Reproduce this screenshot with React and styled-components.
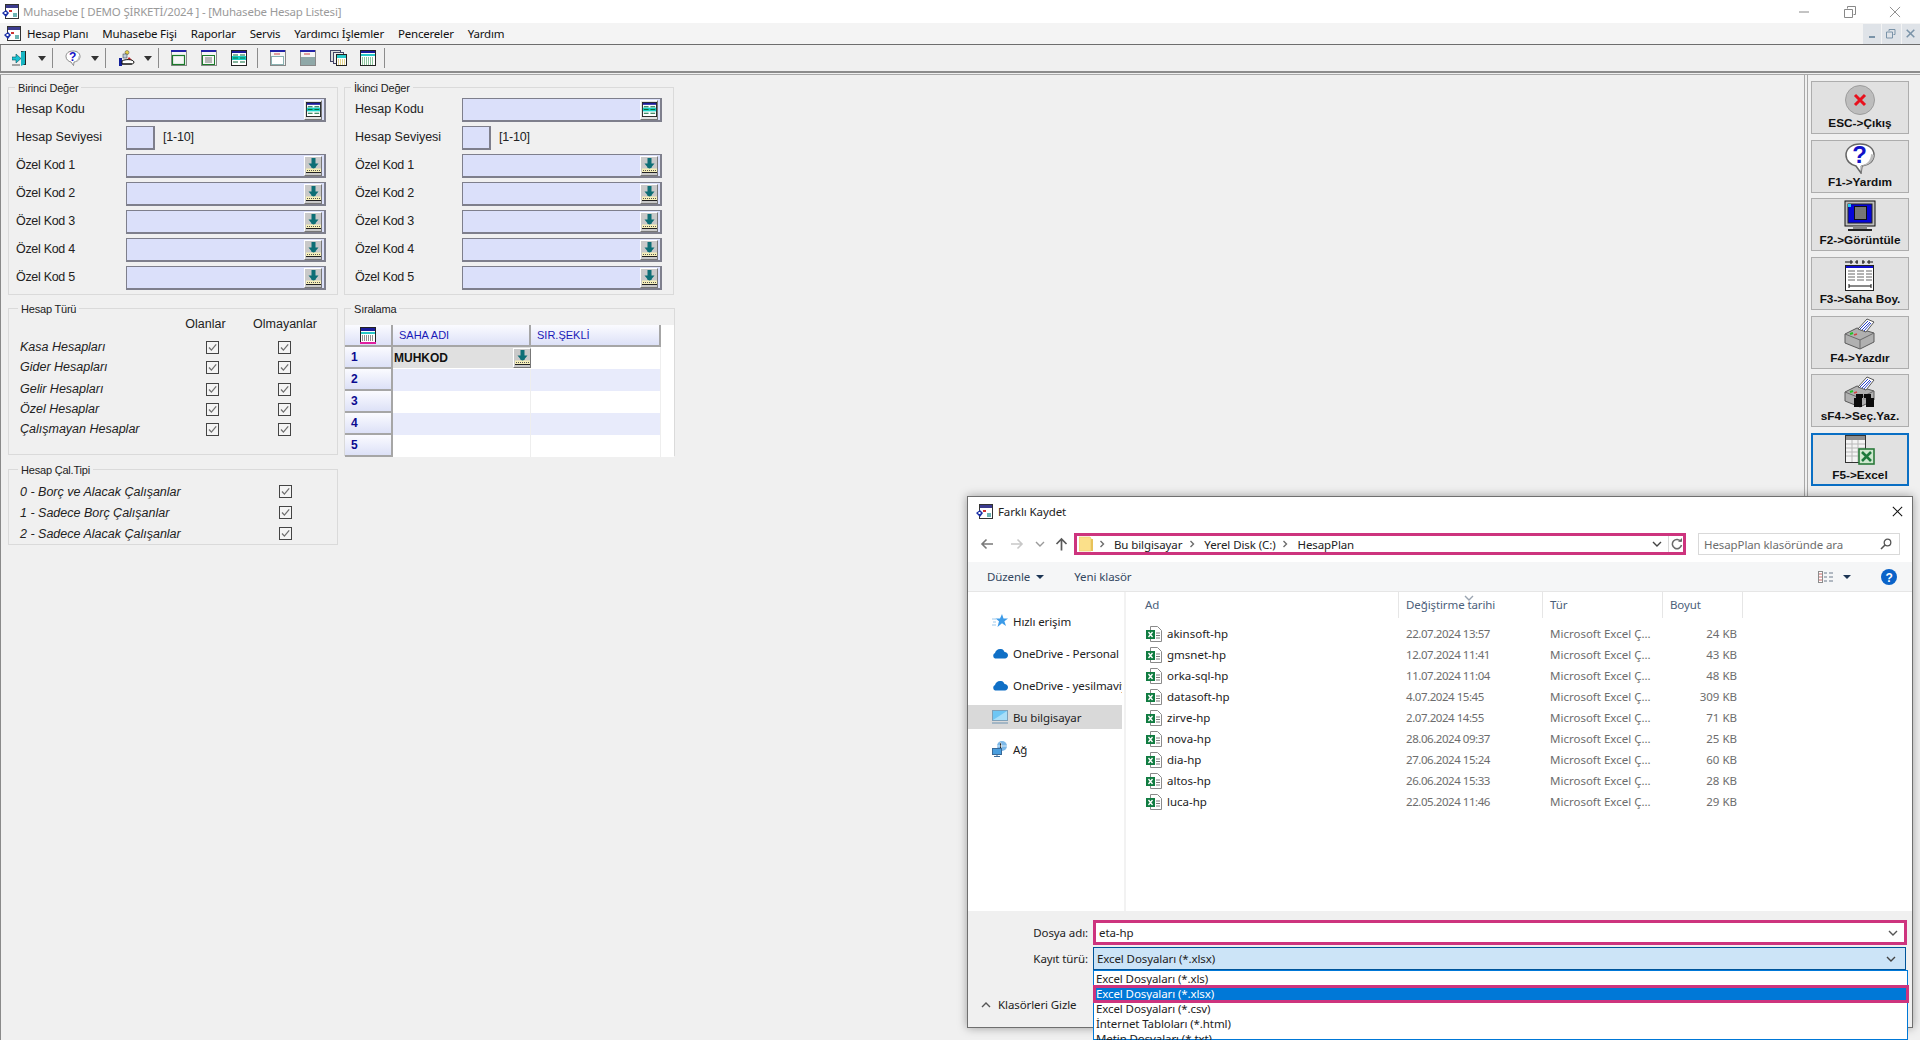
import { Fragment } from "react";
import styled, { createGlobalStyle } from "styled-components";

const GlobalStyle = createGlobalStyle`
  html, body { margin: 0; padding: 0; background: #f0f0f0; }
  * { box-sizing: border-box; }
  svg { display: block; flex: none; }
`;

const ui = `"Liberation Sans", Arial, sans-serif`;
const seg = `"Noto Sans", "Open Sans", sans-serif`;

const Screen = styled.div`
  position: relative;
  width: 1920px;
  height: 1040px;
  overflow: hidden;
  background: #f0f0f0;
  font-family: ${ui};
  color: #111;
  display: flex;
  flex-direction: column;
`;

const TitleBar = styled.div`
  height: 23px;
  background: #fff;
  display: flex;
  align-items: center;
  padding-left: 2px;
  font: 11.5px ${seg};
  letter-spacing: -0.2px;
  color: #9a9a9a;
  gap: 4px;
`;
const WinBtns = styled.div`
  margin-left: auto;
  display: flex;
  align-items: center;
  gap: 33.5px;
  padding-right: 19px;
`;

const MenuBar = styled.div`
  height: 22px;
  display: flex;
  align-items: center;
  padding-left: 4px;
  background: #f4f4f4;
  border-bottom: 1px solid #6d6d6d;
  font: 11.5px ${seg};
  letter-spacing: -0.2px;
  color: #111;
`;
const MenuItem = styled.span`
  margin-left: ${(p) => p.$gap}px;
`;
const MdiBtns = styled.div`
  margin-left: auto;
  display: flex;
  gap: 1px;
`;
const MdiBtn = styled.div`
  width: 18.5px;
  height: 20px;
  background: #dfe3e8;
  display: flex;
  align-items: center;
  justify-content: center;
`;

const ToolBar = styled.div`
  height: 28px;
  display: flex;
  align-items: center;
  padding-left: 4px;
  border-left: 1px solid #8a8a8a;
  border-bottom: 2px solid #8c8c8c;
`;
const ToolBtn = styled.div`
  width: 30px;
  height: 22px;
  display: flex;
  align-items: center;
  justify-content: center;
`;
const Caret = styled.div`
  width: 14px;
  display: flex;
  justify-content: center;
  &::before {
    content: "";
    border: 4px solid transparent;
    border-top: 5px solid #333;
    border-bottom: 0;
  }
`;
const ToolSep = styled.div`
  width: 1px;
  height: 20px;
  background: #8c8c8c;
  margin: 0 5px 0 ${(p) => p.$left ?? 3}px;
`;

const Body = styled.div`
  flex: 1;
  display: flex;
  margin-top: 1px;
  border-top: 1px solid #a8a8a8;
  min-height: 0;
`;
const Form = styled.div`
  width: 1804px;
  border-left: 1px solid #8a8a8a;
  padding: 12px 0 0 7px;
  display: flex;
  gap: 6px;
  align-items: flex-start;
`;
const Stack = styled.div`
  display: flex;
  flex-direction: column;
  width: ${(p) => p.$w}px;
`;
const Panel = styled.div`
  position: relative;
  width: ${(p) => p.$w ?? 330}px;
  height: ${(p) => p.$h}px;
  margin-bottom: ${(p) => p.$mb ?? 0}px;
  border: 1.5px solid #dadada;
  padding: ${(p) => p.$pad};
`;
const Legend = styled.span`
  position: absolute;
  top: -7px;
  left: ${(p) => p.$left}px;
  padding: 0 3px;
  background: #f0f0f0;
  font-size: 11px;
  line-height: 14px;
  letter-spacing: -0.2px;
  color: #222;
`;
const Fields = styled.div`
  display: flex;
  flex-direction: column;
  gap: 4px;
`;
const FieldRow = styled.div`
  display: flex;
  align-items: center;
  height: 24px;
`;
const FieldLabel = styled.span`
  width: ${(p) => p.$w}px;
  padding-bottom: 2px;
  font-size: 12.5px;
  letter-spacing: ${(p) => (p.$tight ? "-0.3px" : "0")};
  color: #222;
`;
const Input = styled.div`
  width: ${(p) => (p.$small ? 29 : 200)}px;
  height: 24px;
  background: #dbe0fa;
  border: 1px solid #7e7f8c;
  border-right-width: 2px;
  border-bottom-width: 2px;
  display: flex;
  align-items: center;
  justify-content: flex-end;
  padding-right: 2px;
`;
const PickBtn = styled.div`
  width: 18px;
  height: 20px;
  background: ${(p) => (p.$light ? "#e4e4e4" : "#c9c9c9")};
  border: 1px solid;
  border-color: #fff #777 #777 #fff;
  display: flex;
  align-items: center;
  justify-content: center;
`;
const RangeHint = styled.span`
  margin-left: 8px;
  padding-bottom: 2px;
  font-size: 12.5px;
  letter-spacing: -0.2px;
  color: #222;
`;

const ChoiceHead = styled.div`
  display: grid;
  grid-template-columns: 157px 72px 72px;
  height: 20px;
  align-items: center;
  margin-bottom: 3px;
  font-size: 12.5px;
  color: #222;
`;
const HeadCell = styled.span`
  grid-column: ${(p) => p.$col};
  justify-self: center;
  padding-right: ${(p) => p.$shift ?? 0}px;
  white-space: nowrap;
`;
const ChoiceRow = styled.div`
  display: grid;
  grid-template-columns: ${(p) => p.$cols};
  height: ${(p) => p.$h}px;
  align-items: center;
  margin-top: ${(p) => p.$top ?? 0}px;
  font-size: 12.5px;
  font-style: italic;
  color: #222;
`;
const CheckBox = styled.span`
  justify-self: center;
  width: 13px;
  height: 13px;
  background: #f4f4f4;
  border: 1px solid #444;
  display: flex;
  align-items: center;
  justify-content: center;
`;

const SortGrid = styled.div`
  display: grid;
  grid-template-columns: 48px 138px 130px 12px;
  grid-auto-rows: 22px;
  background: #fff;
  font-size: 11px;
`;
const FixedCell = styled.div`
  background: linear-gradient(#fbfbff, #dde1f7);
  border-right: 2px solid #a6a6a6;
  border-bottom: 2px solid #a6a6a6;
  display: flex;
  align-items: center;
  padding-left: ${(p) => p.$pad ?? 6}px;
  justify-content: ${(p) => (p.$center ? "center" : "flex-start")};
  color: ${(p) => (p.$head ? "#1a1ab8" : "#0a0a90")};
  font-weight: ${(p) => (p.$head ? 400 : 700)};
  font-size: ${(p) => (p.$head ? 11 : 12)}px;
`;
const DataCell = styled.div`
  background: ${(p) => (p.$alt ? "#e8ebfb" : "#fff")};
  border-right: 1px solid #eeeeee;
`;
const SelCell = styled.div`
  background: #e0e0e0;
  border-bottom: 1px solid #fff;
  display: flex;
  align-items: center;
  justify-content: space-between;
  padding-left: 1px;
  font-size: 12px;
  font-weight: 700;
  color: #111;
`;
const Spacer = styled.div`
  background: #fff;
`;

const Sidebar = styled.div`
  flex: 1;
  border-left: 1px solid #a8a8a8;
  padding: 6px 11px 0 6px;
  display: flex;
  flex-direction: column;
  gap: 5.67px;
  position: relative;
  &::before {
    content: "";
    position: absolute;
    left: 2px;
    top: -1px;
    bottom: 0;
    width: 1px;
    background: #a8a8a8;
  }
`;
const SideBtn = styled.div`
  height: 53px;
  background: #e1e1e1;
  border: ${(p) => (p.$focus ? "2px solid #0a6fc4" : "1px solid #adadad")};
  display: flex;
  flex-direction: column;
  align-items: center;
  justify-content: flex-end;
  padding-bottom: ${(p) => (p.$focus ? 2 : 3)}px;
  gap: 1px;
  font-size: 11.8px;
  line-height: 14px;
  font-weight: 700;
  color: #111;
  white-space: nowrap;
`;

/* save dialog */
const Dialog = styled.div`
  position: absolute;
  left: 967px;
  top: 496px;
  width: 946px;
  height: 532px;
  background: #fff;
  border: 1px solid #6f6f6f;
  box-shadow: 0 0 9px rgba(0, 0, 0, 0.35);
  display: flex;
  flex-direction: column;
  font: 11.5px ${seg};
  letter-spacing: -0.1px;
  color: #222;
`;
const DlgTitle = styled.div`
  height: 30px;
  display: flex;
  align-items: center;
  padding: 0 9px 2px 8px;
  gap: 5px;
`;
const DlgClose = styled.div`
  margin-left: auto;
`;
const AddrRow = styled.div`
  height: 35px;
  display: flex;
  align-items: flex-start;
  padding-top: 6px;
`;
const NavBtns = styled.div`
  width: 106px;
  height: 22px;
  padding-left: 12px;
  display: flex;
  align-items: center;
`;
const NavBtn = styled.div`
  width: ${(p) => p.$w}px;
`;
const AddrBox = styled.div`
  width: 612px;
  height: 22px;
  border: 3px solid #cd347e;
  display: flex;
  align-items: center;
  padding-left: 2px;
`;
const Crumb = styled.span`
  margin: 0 5px 0 7px;
  white-space: nowrap;
`;
const AddrTools = styled.div`
  margin-left: auto;
  display: flex;
  align-items: center;
  height: 100%;
`;
const AddrDiv = styled.div`
  width: 1px;
  height: 100%;
  margin: 0 2px 0 6px;
  background: #d9d9d9;
`;
const SearchBox = styled.div`
  width: 202px;
  height: 22px;
  margin-left: 12px;
  border: 1px solid #d9d9d9;
  display: flex;
  align-items: center;
  justify-content: space-between;
  padding: 0 7px 0 5px;
  color: #6d6d6d;
`;
const CmdBar = styled.div`
  height: 30px;
  background: #f5f6f7;
  border-bottom: 1px solid #e6e6e6;
  display: flex;
  align-items: center;
  padding: 0 15px 0 19px;
  color: #33475f;
`;
const CmdArrow = styled.span`
  margin-left: 6px;
  width: 0;
  height: 0;
  border: 4px solid transparent;
  border-top: 4px solid #1c3554;
  border-bottom: 0;
`;
const CmdItem = styled.span`
  margin-left: ${(p) => p.$gap ?? 0}px;
`;
const CmdRight = styled.div`
  margin-left: auto;
  display: flex;
  align-items: center;
  gap: 30px;
`;
const ViewTool = styled.div`
  display: flex;
  align-items: center;
  gap: 3px;
`;
const Main = styled.div`
  flex: 1;
  display: flex;
  min-height: 0;
`;
const Nav = styled.div`
  width: 158px;
  padding: 17px 2px 0 0;
  border-right: 2px solid #f2f2f2;
  display: flex;
  flex-direction: column;
  gap: 8px;
`;
const NavItem = styled.div`
  height: 24px;
  display: flex;
  align-items: center;
  gap: 5px;
  padding-left: 24px;
  background: ${(p) => (p.$on ? "#d9d9d9" : "transparent")};
  white-space: nowrap;
  overflow: hidden;
`;
const List = styled.div`
  flex: 1;
  position: relative;
`;
const HeadRow = styled.div`
  display: grid;
  grid-template-columns: 273px 144px 120px 80px;
  height: 26px;
  margin-bottom: 5px;
  color: #4c607a;
`;
const HeadCol = styled.div`
  padding-left: ${(p) => p.$pad}px;
  padding-top: 5px;
  border-right: 1px solid #e6e6e6;
  position: relative;
`;
const SortMark = styled.span`
  position: absolute;
  left: 65px;
  top: 1px;
`;
const FileRow = styled.div`
  display: grid;
  grid-template-columns: 273px 144px 120px 74px;
  height: 21px;
  align-items: center;
  color: #6d6d6d;
`;
const FileName = styled.div`
  display: flex;
  align-items: center;
  gap: 5px;
  padding-left: 20px;
  letter-spacing: 0;
  color: #222;
`;
const FileCol = styled.div`
  padding-left: 7px;
  white-space: nowrap;
  letter-spacing: ${(p) => p.$ls ?? 0}px;
  text-align: ${(p) => (p.$right ? "right" : "left")};
`;
const Footer = styled.div`
  position: relative;
  height: 116px;
  background: #f0f0f0;
  padding: 9px 5px 0 0;
`;
const FootRow = styled.div`
  display: flex;
  align-items: center;
  height: ${(p) => p.$h}px;
  margin-bottom: ${(p) => p.$mb ?? 0}px;
`;
const FootLabel = styled.span`
  width: 125px;
  text-align: right;
  padding-right: 5px;
  flex: none;
`;
const NameBox = styled.div`
  flex: 1;
  height: 100%;
  background: #fff;
  border: 3px solid #cd347e;
  display: flex;
  align-items: center;
  justify-content: space-between;
  padding: 0 6px 0 3px;
`;
const TypeBox = styled.div`
  flex: 1;
  height: 100%;
  margin-right: 1px;
  background: #cce4f7;
  border: 1px solid #005499;
  display: flex;
  align-items: center;
  justify-content: space-between;
  padding: 0 9px 0 3px;
`;
const ToggleFolders = styled.div`
  position: absolute;
  left: 13px;
  top: 86px;
  display: flex;
  align-items: center;
  gap: 7px;
`;
const DropList = styled.div`
  position: absolute;
  left: 125px;
  top: 59px;
  width: 815px;
  height: 70px;
  background: #fff;
  border: 1px solid #0078d7;
  padding-top: 1px;
`;
const DropItem = styled.div`
  position: relative;
  height: 15px;
  line-height: 13px;
  padding-left: 2px;
  white-space: nowrap;
  background: ${(p) => (p.$on ? "#0078d7" : "transparent")};
  color: ${(p) => (p.$on ? "#fff" : "#222")};
  &::after {
    content: "";
    display: ${(p) => (p.$on ? "block" : "none")};
    position: absolute;
    inset: -2px -2px -1px -1px;
    border: 3px solid #cd347e;
  }
`;

/* icons */
const AppIcon = () => (
  <svg width="17" height="17" viewBox="0 0 17 17">
    <rect x="3.5" y="1.5" width="13" height="14" fill="#fff" stroke="#333" />
    <rect x="4" y="2" width="12" height="3" fill="#3b3b8e" />
    <rect x="7" y="7" width="3" height="2" fill="#c33" />
    <rect x="11" y="10" width="4" height="4" fill="#6bb3b3" />
    <path d="M0 10l4-3 3 3-3 4z" fill="#1a2fa8" />
    <rect x="2.5" y="9" width="2" height="2" fill="#fff" />
  </svg>
);
const CloseGlyph = ({ size = 13, color = "#777", w = 1 }) => (
  <svg width={size} height={size} viewBox="0 0 13 13">
    <path d="M1 1l11 11M12 1L1 12" stroke={color} strokeWidth={w} fill="none" />
  </svg>
);
const ExitTool = () => (
  <svg width="16" height="17" viewBox="0 0 16 17">
    <path d="M9 1h5v14H9z" fill="#222" />
    <path d="M9 2l4-1v13l-4 2z" fill="#17b6c4" />
    <path d="M0 7h4V4l5 4.5L4 13v-3H0z" fill="#18c2d2" stroke="#08505a" strokeWidth=".6" />
    <path d="M0 15h8" stroke="#555" />
  </svg>
);
const HelpBubble = ({ size = 16 }) => (
  <svg width={size} height={size} viewBox="0 0 32 32">
    <path d="M16 2C7 2 2 7 2 13c0 6 5 10 10 11l5 7 1-7c7-1 12-5 12-11C30 7 25 2 16 2z" fill="#fff" stroke="#666" strokeWidth="1.5" />
    <path d="M30 13c0 6-5 10-12 11l-1 7-1-7c7-1 11-6 11-12z" fill="#bdbdbd" />
    <text x="15.5" y="21" fontFamily="Liberation Sans" fontWeight="700" fontSize="24" textAnchor="middle" fill="#1212c8">?</text>
  </svg>
);
const HandTool = () => (
  <svg width="17" height="17" viewBox="0 0 17 17">
    <circle cx="9" cy="2.5" r="2" fill="#e8d24a" stroke="#444" strokeWidth=".5" />
    <rect x="5" y="4" width="4" height="4" fill="#bcd" stroke="#333" strokeWidth=".5" />
    <path d="M11 7l3 3H9z" fill="#c22" />
    <path d="M1 8h3v8H1z" fill="#12209c" />
    <path d="M4 11c3-2 11-2 12 1 0 2-2 2-4 2H4z" fill="#fff" stroke="#111" />
    <path d="M4 14h10" stroke="#111" />
  </svg>
);
const WinTool = ({ inner }) => (
  <svg width="16" height="16" viewBox="0 0 16 16">
    <rect x=".5" y=".5" width="15" height="15" fill="#f5f5f5" stroke="#888" />
    <rect x="0" y="0" width="15" height="2" fill="#2222a8" />
    {inner}
  </svg>
);
const GridMark = ({ size = 16 }) => (
  <svg width={size} height={size} viewBox="0 0 16 16">
    <rect x=".5" y=".5" width="15" height="15" fill="#fff" stroke="#222" />
    <rect x="1" y="1" width="14" height="2" fill="#1b1b9a" />
    <rect x="1" y="6" width="14" height="4" fill="#17d0c4" />
    <path d="M2 5h5M9 5h5M2 8h5M9 8h5M2 12h5M9 12h5" stroke="#0a6a3a" strokeWidth="1.2" />
  </svg>
);
const PickMark = ({ size = 15 }) => (
  <svg width={size} height={size} viewBox="0 0 15 15">
    <path d="M5.5 0h4v5.5h3L7.5 11.500 2.500 5.500h3z" fill="#0e6f76" />
    <rect x="0" y="10.500" width="15" height="3.500" fill="#f6efb8" />
    <path d="M1 12.500h13" stroke="#555" strokeDasharray="1 1" />
    <path d="M0 14.500h15" stroke="#222" />
    <path d="M5.5 7h4v3h-4z" fill="#0e6f76" />
  </svg>
);
const TableMark = () => (
  <svg width="16" height="17" viewBox="0 0 16 17">
    <rect x=".5" y=".5" width="15" height="15" fill="#fff" stroke="#222" />
    <rect x="1" y="1" width="14" height="3" fill="#1b1b9a" />
    <rect x="1" y="5" width="14" height="2" fill="#28c8c8" />
    <path d="M2 9h12M2 11h12M2 13h12" stroke="#222" strokeDasharray="1 1" />
    <rect x="0" y="15" width="16" height="2" fill="#e020a0" />
  </svg>
);

const CheckIcon = () => (
  <svg width="11" height="11" viewBox="0 0 11 11">
    <path d="M2 5.5l2.4 2.6L9.2 2.4" fill="none" stroke="#707070" strokeWidth="1.3" />
  </svg>
);
const Check = () => (
  <CheckBox>
    <CheckIcon />
  </CheckBox>
);

const ExitBig = () => (
  <svg width="30" height="30" viewBox="0 0 30 30">
    <circle cx="15" cy="15" r="14.5" fill="#bdbdbd" stroke="#9c9c9c" />
    <path d="M10 10l10 10M20 10L10 20" stroke="#e8101c" strokeWidth="3" />
  </svg>
);
const MonitorBig = () => (
  <svg width="32" height="32" viewBox="0 0 32 32">
    <rect x="1" y="1" width="30" height="25" fill="#bdbdbd" stroke="#111" />
    <rect x="4" y="4" width="24" height="19" fill="#0606d8" stroke="#222" />
    <rect x="4" y="4" width="3" height="3" fill="#21c8f0" />
    <rect x="10" y="6" width="13" height="14" fill="#111" />
    <path d="M11 8h11M11 10h11M11 12h11M11 14h11M11 16h11M11 18h11" stroke="#ddd" />
    <rect x="9" y="26" width="14" height="3" fill="#888" />
    <rect x="4" y="29" width="24" height="2" fill="#222" />
  </svg>
);
const ColsBig = () => (
  <svg width="30" height="31" viewBox="0 0 30 31">
    <path d="M0 2h8M6 0v4M13 2h-3M17 2h3M22 2h6M24 0v4M12 0v4M18 0v4" stroke="#111" />
    <rect x=".5" y="5.5" width="28" height="25" fill="#fff" stroke="#222" />
    <rect x="1" y="6" width="27" height="2" fill="#1010d0" />
    <path d="M3 11h7M3 14h7M3 17h7M3 20h7M12 11h7M12 14h7M12 17h7M12 20h7M21 11h6M21 14h6M21 17h6M21 20h6" stroke="#666" />
    <path d="M4 26h22M4 24v4M26 24v4" stroke="#111" />
  </svg>
);
const PrinterShape = () => (
  <>
    <path d="M1 16l12-6 17 5v9l-14 7-15-6z" fill="#b0b0b0" stroke="#5a5a5a" />
    <path d="M14 11l9-10 7 3-8 10z" fill="#fff" stroke="#555" />
    <path d="M16 11l8-8M18 12l8-8M20 13l7-8" stroke="#2a42c8" />
    <path d="M1 16l15 6 14-7" fill="none" stroke="#6a6a6a" />
    <path d="M16 22v9" stroke="#6a6a6a" />
    <path d="M6 16l3-1" stroke="#22c422" strokeWidth="2" />
    <path d="M10 17l3-1" stroke="#d04444" strokeWidth="1.5" />
  </>
);
const PrinterBig = () => (
  <svg width="32" height="32" viewBox="0 0 32 32">
    <PrinterShape />
  </svg>
);
const SelectPrintBig = () => (
  <svg width="32" height="32" viewBox="0 0 32 32">
    <PrinterShape />
    <path d="M12 18h7v4h-1v9h-8v-9h2zM20 18h7v4h3v9h-8v-9h-2z" fill="#0c0c0c" />
    <path d="M19 23h3" stroke="#888" />
  </svg>
);
const ExcelBig = () => (
  <svg width="30" height="32" viewBox="0 0 30 32">
    <rect x=".5" y=".5" width="20" height="27" fill="#f4f4f4" stroke="#333" />
    <rect x="1" y="1" width="19" height="4" fill="#8e8e8e" />
    <path d="M1 9h19M1 13h19M1 17h19M1 21h19M7 5v22M13 5v22" stroke="#b8b8b8" />
    <rect x="14" y="14" width="15" height="15" fill="#cfe8cf" stroke="#2a7a3a" strokeWidth="1.6" />
    <path d="M17 17l9 9M26 17l-9 9" stroke="#1d7a3c" strokeWidth="2.600" />
  </svg>
);
const FileIcon = () => (
  <svg width="16" height="16" viewBox="0 0 16 16">
    <path d="M4.5.5h7l4 4v11h-11z" fill="#fff" stroke="#8a8a8a" />
    <path d="M10 7h4M10 9.5h4M10 12h4" stroke="#7c7c7c" />
    <rect x="0" y="4" width="9" height="9" fill="#107c41" />
    <path d="M2.5 6l4 5M6.5 6l-4 5" stroke="#fff" strokeWidth="1.3" />
  </svg>
);
const FolderIcon = () => (
  <svg width="18" height="16" viewBox="0 0 18 16">
    <path d="M0 1h11l1 1v13H0z" fill="#fbe08a" stroke="#e6c868" strokeWidth=".6" />
    <path d="M12 3h2v12h-2z" fill="#e8c25a" />
  </svg>
);
const Chevron = ({ dir = "right", color = "#6d6d6d" }) => {
  const d = { right: "M3.5 2l3 3-3 3", down: "M1 3l4 4 4-4", up: "M1 7l4-4 4 4" }[dir];
  return (
    <svg width="10" height="10" viewBox="0 0 10 10">
      <path d={d} fill="none" stroke={color} strokeWidth="1.4" />
    </svg>
  );
};
const ArrowLeft = ({ color }) => (
  <svg width="14" height="12" viewBox="0 0 14 12">
    <path d="M13 6H2M6.5 1.5L2 6l4.5 4.5" fill="none" stroke={color} strokeWidth="1.6" />
  </svg>
);
const ArrowRight = ({ color }) => (
  <svg width="14" height="12" viewBox="0 0 14 12">
    <path d="M1 6h11M7.5 1.5L12 6l-4.5 4.5" fill="none" stroke={color} strokeWidth="1.6" />
  </svg>
);
const ArrowUp = () => (
  <svg width="13" height="14" viewBox="0 0 13 14">
    <path d="M6.5 13.5V2M1.5 7l5-5 5 5" fill="none" stroke="#5a5a5a" strokeWidth="1.7" />
  </svg>
);
const Refresh = () => (
  <svg width="12" height="12" viewBox="0 0 12 12">
    <path d="M9.8 3.5A4.6 4.6 0 1 0 10.5 7" fill="none" stroke="#6a6a6a" strokeWidth="1.5" />
    <path d="M7 3.8h4V0z" fill="#6a6a6a" />
  </svg>
);
const SearchIcon = () => (
  <svg width="12" height="12" viewBox="0 0 12 12">
    <circle cx="7.5" cy="4.5" r="3.3" fill="none" stroke="#555" strokeWidth="1.3" />
    <path d="M5 7l-4 4" stroke="#555" strokeWidth="1.6" />
  </svg>
);
const ViewIcon = () => (
  <svg width="16" height="12" viewBox="0 0 16 12">
    <rect x=".5" y=".5" width="4" height="11" fill="#fff" stroke="#8c8c8c" />
    <path d="M1 3h3M1 6h3M1 9h3" stroke="#c66" />
    <path d="M6 2h3M11 2h4M6 6h3M11 6h4M6 10h3M11 10h4" stroke="#6c7a8c" />
  </svg>
);
const HelpDisc = () => (
  <svg width="16" height="16" viewBox="0 0 16 16">
    <circle cx="8" cy="8" r="8" fill="#0a63c9" />
    <text x="8" y="12.5" fontFamily="Liberation Sans" fontWeight="700" fontSize="12" textAnchor="middle" fill="#fff">?</text>
  </svg>
);
const StarIcon = () => (
  <svg width="16" height="16" viewBox="0 0 16 16">
    <path d="M10 1l1.5 4.5H16l-3.6 2.8L14 13l-4-2.7L5.5 14 7 8.3 3.5 5.5H8z" fill="#3c9be8" />
    <path d="M0 6h4M1 9h3M0 12h4" stroke="#9cc8ec" />
  </svg>
);
const CloudIcon = () => (
  <svg width="16" height="11" viewBox="0 0 16 11">
    <path d="M3 10.5A3 3 0 0 1 3 5c.5-2.500 3-4.500 6-4 2 .2 3 1.500 3.500 3 2 0 3.500 1.500 3.500 3.300 0 2-1.500 3.200-3 3.200z" fill="#0f6fc6" />
  </svg>
);
const PcIcon = () => (
  <svg width="16" height="15" viewBox="0 0 16 15">
    <rect x=".5" y=".5" width="15" height="10" fill="#6ec6f4" stroke="#7ea0b8" />
    <path d="M1 10L15 1v9z" fill="#a8def8" />
    <path d="M0 13h16" stroke="#8fa8bc" strokeWidth="1.5" />
  </svg>
);
const NetIcon = () => (
  <svg width="16" height="16" viewBox="0 0 16 16">
    <circle cx="10" cy="5" r="5" fill="#7cb8e8" />
    <path d="M8 1c2 2 2 6 0 8M5 5h10" stroke="#fff" strokeWidth=".7" />
    <rect x=".5" y="7.5" width="9" height="6" fill="#4a9ede" stroke="#3a6a98" />
    <path d="M5 14v2M2 15.5h6" stroke="#3a6a98" />
  </svg>
);

/* data */
const menus = [
  ["Hesap Planı", 6],
  ["Muhasebe Fişi", 14],
  ["Raporlar", 14],
  ["Servis", 14],
  ["Yardımcı İşlemler", 14],
  ["Pencereler", 14],
  ["Yardım", 14],
];
const codes = ["Özel Kod 1", "Özel Kod 2", "Özel Kod 3", "Özel Kod 4", "Özel Kod 5"];
const accountTypes = [
  ["Kasa Hesapları", 0],
  ["Gider Hesapları", 0],
  ["Gelir Hesapları", 2],
  ["Özel Hesaplar", 0],
  ["Çalışmayan Hesaplar", 0],
];
const workTypes = [
  "0 - Borç ve Alacak Çalışanlar",
  "1 - Sadece Borç Çalışanlar",
  "2 - Sadece Alacak Çalışanlar",
];
const sideButtons = [
  ["ESC->Çıkış", <ExitBig />],
  ["F1->Yardım", <HelpBubble size={32} />],
  ["F2->Görüntüle", <MonitorBig />],
  ["F3->Saha Boy.", <ColsBig />],
  ["F4->Yazdır", <PrinterBig />],
  ["sF4->Seç.Yaz.", <SelectPrintBig />],
  ["F5->Excel", <ExcelBig />, true],
];
const files = [
  ["akinsoft-hp", "22.07.2024 13:57", "24 KB"],
  ["gmsnet-hp", "12.07.2024 11:41", "43 KB"],
  ["orka-sql-hp", "11.07.2024 11:04", "48 KB"],
  ["datasoft-hp", "4.07.2024 15:45", "309 KB"],
  ["zirve-hp", "2.07.2024 14:55", "71 KB"],
  ["nova-hp", "28.06.2024 09:37", "25 KB"],
  ["dia-hp", "27.06.2024 15:24", "60 KB"],
  ["altos-hp", "26.06.2024 15:33", "28 KB"],
  ["luca-hp", "22.05.2024 11:46", "29 KB"],
];
const fileTypes = [
  "Excel Dosyaları (*.xls)",
  "Excel Dosyaları (*.xlsx)",
  "Excel Dosyaları (*.csv)",
  "İnternet Tabloları (*.html)",
  "Metin Dosyaları (*.txt)",
];

const FieldSet = ({ title, legendLeft, labelW, pad }) => (
  <Panel $h={208} $mb={13} $pad={pad}>
    <Legend $left={legendLeft}>{title}</Legend>
    <Fields>
      <FieldRow>
        <FieldLabel $w={labelW}>Hesap Kodu</FieldLabel>
        <Input>
          <PickBtn $light>
            <GridMark size={15} />
          </PickBtn>
        </Input>
      </FieldRow>
      <FieldRow>
        <FieldLabel $w={labelW}>Hesap Seviyesi</FieldLabel>
        <Input $small />
        <RangeHint>[1-10]</RangeHint>
      </FieldRow>
      {codes.map((c) => (
        <FieldRow key={c}>
          <FieldLabel $w={labelW} $tight>
            {c}
          </FieldLabel>
          <Input>
            <PickBtn>
              <PickMark />
            </PickBtn>
          </Input>
        </FieldRow>
      ))}
    </Fields>
  </Panel>
);

const SortTable = () => (
  <SortGrid>
    <FixedCell $head $center $pad={0}>
      <TableMark />
    </FixedCell>
    <FixedCell $head>SAHA ADI</FixedCell>
    <FixedCell $head>SIR.ŞEKLİ</FixedCell>
    <Spacer />
    {[1, 2, 3, 4, 5].map((n) => (
      <Fragment key={n}>
        <FixedCell>{n}</FixedCell>
        {n === 1 ? (
          <SelCell>
            MUHKOD
            <PickBtn>
              <PickMark />
            </PickBtn>
          </SelCell>
        ) : (
          <DataCell $alt={n % 2 === 0} />
        )}
        <DataCell $alt={n % 2 === 0} />
        <Spacer />
      </Fragment>
    ))}
  </SortGrid>
);

const SaveDialog = () => (
  <Dialog>
    <DlgTitle>
      <AppIcon />
      Farklı Kaydet
      <DlgClose>
        <CloseGlyph size={11} color="#111" w={1.2} />
      </DlgClose>
    </DlgTitle>
    <AddrRow>
      <NavBtns>
        <NavBtn $w={30}>
          <ArrowLeft color="#7a7a7a" />
        </NavBtn>
        <NavBtn $w={25}>
          <ArrowRight color="#c8c8c8" />
        </NavBtn>
        <NavBtn $w={20}>
          <Chevron dir="down" color="#9a9a9a" />
        </NavBtn>
        <ArrowUp />
      </NavBtns>
      <AddrBox>
        <FolderIcon />
        <Chevron />
        <Crumb>Bu bilgisayar</Crumb>
        <Chevron />
        <Crumb>Yerel Disk (C:)</Crumb>
        <Chevron />
        <Crumb>HesapPlan</Crumb>
        <AddrTools>
          <Chevron dir="down" color="#444" />
          <AddrDiv />
          <Refresh />
        </AddrTools>
      </AddrBox>
      <SearchBox>
        HesapPlan klasöründe ara
        <SearchIcon />
      </SearchBox>
    </AddrRow>
    <CmdBar>
      <CmdItem>Düzenle</CmdItem>
      <CmdArrow />
      <CmdItem $gap={30}>Yeni klasör</CmdItem>
      <CmdRight>
        <ViewTool>
          <ViewIcon />
          <CmdArrow />
        </ViewTool>
        <HelpDisc />
      </CmdRight>
    </CmdBar>
    <Main>
      <Nav>
        <NavItem>
          <StarIcon />
          Hızlı erişim
        </NavItem>
        <NavItem>
          <CloudIcon />
          OneDrive - Personal
        </NavItem>
        <NavItem>
          <CloudIcon />
          OneDrive - yesilmaviy
        </NavItem>
        <NavItem $on>
          <PcIcon />
          Bu bilgisayar
        </NavItem>
        <NavItem>
          <NetIcon />
          Ağ
        </NavItem>
      </Nav>
      <List>
        <HeadRow>
          <HeadCol $pad={19}>Ad</HeadCol>
          <HeadCol $pad={7}>
            <SortMark>
              <Chevron dir="down" color="#9aa4b0" />
            </SortMark>
            Değiştirme tarihi
          </HeadCol>
          <HeadCol $pad={7}>Tür</HeadCol>
          <HeadCol $pad={7}>Boyut</HeadCol>
        </HeadRow>
        {files.map(([name, date, size]) => (
          <FileRow key={name}>
            <FileName>
              <FileIcon />
              {name}
            </FileName>
            <FileCol $ls={-0.45}>{date}</FileCol>
            <FileCol>Microsoft Excel Ç...</FileCol>
            <FileCol $right>{size}</FileCol>
          </FileRow>
        ))}
      </List>
    </Main>
    <Footer>
      <FootRow $h={25} $mb={2}>
        <FootLabel>Dosya adı:</FootLabel>
        <NameBox>
          eta-hp
          <Chevron dir="down" color="#555" />
        </NameBox>
      </FootRow>
      <FootRow $h={23}>
        <FootLabel>Kayıt türü:</FootLabel>
        <TypeBox>
          Excel Dosyaları (*.xlsx)
          <Chevron dir="down" color="#444" />
        </TypeBox>
      </FootRow>
      <ToggleFolders>
        <Chevron dir="up" color="#555" />
        Klasörleri Gizle
      </ToggleFolders>
      <DropList>
        {fileTypes.map((t, i) => (
          <DropItem key={t} $on={i === 1}>
            {t}
          </DropItem>
        ))}
      </DropList>
    </Footer>
  </Dialog>
);

const App = () => (
  <Screen>
    <GlobalStyle />
    <TitleBar>
      <AppIcon />
      Muhasebe [ DEMO ŞİRKETİ/2024 ]  - [Muhasebe Hesap Listesi]
      <WinBtns>
        <svg width="12" height="12" viewBox="0 0 12 12">
          <path d="M1 6h10" stroke="#888" />
        </svg>
        <svg width="12" height="12" viewBox="0 0 12 12">
          <path d="M3.5 2.5v-2h8v8h-2M.5 3.5h8v8h-8z" fill="none" stroke="#888" />
        </svg>
        <CloseGlyph size={12} color="#888" />
      </WinBtns>
    </TitleBar>
    <MenuBar>
      <AppIcon />
      {menus.map(([m, gap]) => (
        <MenuItem key={m} $gap={gap}>
          {m}
        </MenuItem>
      ))}
      <MdiBtns>
        <MdiBtn>
          <svg width="8" height="8" viewBox="0 0 8 8">
            <path d="M1 7h6" stroke="#7a93a8" strokeWidth="2" />
          </svg>
        </MdiBtn>
        <MdiBtn>
          <svg width="10" height="10" viewBox="0 0 10 10">
            <path d="M3 2V.5h6v5H7.5M.5 3h6v6h-6z" fill="none" stroke="#7a93a8" />
          </svg>
        </MdiBtn>
        <MdiBtn>
          <CloseGlyph size={9} color="#7a93a8" w={2.2} />
        </MdiBtn>
      </MdiBtns>
    </MenuBar>
    <ToolBar>
      <ToolBtn>
        <ExitTool />
      </ToolBtn>
      <Caret />
      <ToolSep />
      <ToolBtn>
        <HelpBubble />
      </ToolBtn>
      <Caret />
      <ToolSep />
      <ToolBtn>
        <HandTool />
      </ToolBtn>
      <Caret />
      <ToolSep />
      <ToolBtn>
        <WinTool inner={<rect x="1.5" y="5.5" width="12" height="9" fill="#f5f5f5" stroke="#1a7a2a" strokeWidth="1.2" />} />
      </ToolBtn>
      <ToolBtn>
        <WinTool
          inner={
            <>
              <rect x="1.5" y="5.5" width="12" height="9" fill="#f5f5f5" stroke="#1a7a2a" />
              <path d="M4 8h7M4 10h7M4 12h7" stroke="#777" />
            </>
          }
        />
      </ToolBtn>
      <ToolBtn>
        <GridMark />
      </ToolBtn>
      <ToolSep />
      <ToolBtn>
        <WinTool
          inner={
            <>
              <path d="M4 4h6" stroke="#c44" />
              <rect x="1.5" y="6.5" width="12" height="8" fill="#fff" stroke="#1a6a6a" strokeDasharray="1 1" />
            </>
          }
        />
      </ToolBtn>
      <ToolBtn>
        <WinTool
          inner={
            <>
              <path d="M4 4h6" stroke="#c44" />
              <rect x="1" y="7" width="14" height="8" fill="#8fa8a8" />
            </>
          }
        />
      </ToolBtn>
      <ToolBtn>
        <svg width="17" height="16" viewBox="0 0 17 16">
          <rect x=".5" y=".5" width="10" height="11" fill="#ddd" stroke="#446" />
          <rect x="3.5" y="2.5" width="10" height="11" fill="#eee" stroke="#446" />
          <rect x="6.5" y="4.5" width="10" height="11" fill="#fff" stroke="#222" />
          <rect x="7" y="5" width="9" height="3" fill="#28c8c8" />
          <path d="M8 10h7M8 12h7M8 14h7" stroke="#c8a818" strokeDasharray="1 1" />
        </svg>
      </ToolBtn>
      <ToolBtn>
        <svg width="16" height="16" viewBox="0 0 16 16">
          <rect x=".5" y=".5" width="15" height="15" fill="#fff" stroke="#222" />
          <rect x="1" y="1" width="14" height="2" fill="#1b1b9a" />
          <rect x="1" y="4" width="14" height="2" fill="#28c8c8" />
          <path d="M2 8h12M2 10h12M2 12h12M2 14h12" stroke="#1a8a3a" strokeDasharray="1 1" />
        </svg>
      </ToolBtn>
      <ToolSep $left={1} />
    </ToolBar>
    <Body>
      <Form>
        <Stack $w={330}>
          <FieldSet title="Birinci Değer" legendLeft={6} labelW={110} pad="10px 0 0 7px" />
          <Panel $h={147} $mb={14} $pad="5px 0 0 11px">
            <Legend $left={9}>Hesap Türü</Legend>
            <ChoiceHead>
              <HeadCell $col={2} $shift={15}>
                Olanlar
              </HeadCell>
              <HeadCell $col={3}>Olmayanlar</HeadCell>
            </ChoiceHead>
            {accountTypes.map(([t, top]) => (
              <ChoiceRow key={t} $cols="156px 72px 72px" $h={20} $top={top}>
                <span>{t}</span>
                <Check />
                <Check />
              </ChoiceRow>
            ))}
          </Panel>
          <Panel $h={76} $pad="11px 0 0 11px">
            <Legend $left={9}>Hesap Çal.Tipi</Legend>
            {workTypes.map((t) => (
              <ChoiceRow key={t} $cols="229px 72px" $h={21}>
                <span>{t}</span>
                <Check />
              </ChoiceRow>
            ))}
          </Panel>
        </Stack>
        <Stack $w={331}>
          <FieldSet title="İkinci Değer" legendLeft={6} labelW={107} pad="10px 0 0 10px" />
          <Panel $w={331} $h={148} $pad="16px 0 0 0">
            <Legend $left={6}>Sıralama</Legend>
            <SortTable />
          </Panel>
        </Stack>
      </Form>
      <Sidebar>
        {sideButtons.map(([label, icon, focus]) => (
          <SideBtn key={label} $focus={focus}>
            {icon}
            {label}
          </SideBtn>
        ))}
      </Sidebar>
    </Body>
    <SaveDialog />
  </Screen>
);

export default App;
